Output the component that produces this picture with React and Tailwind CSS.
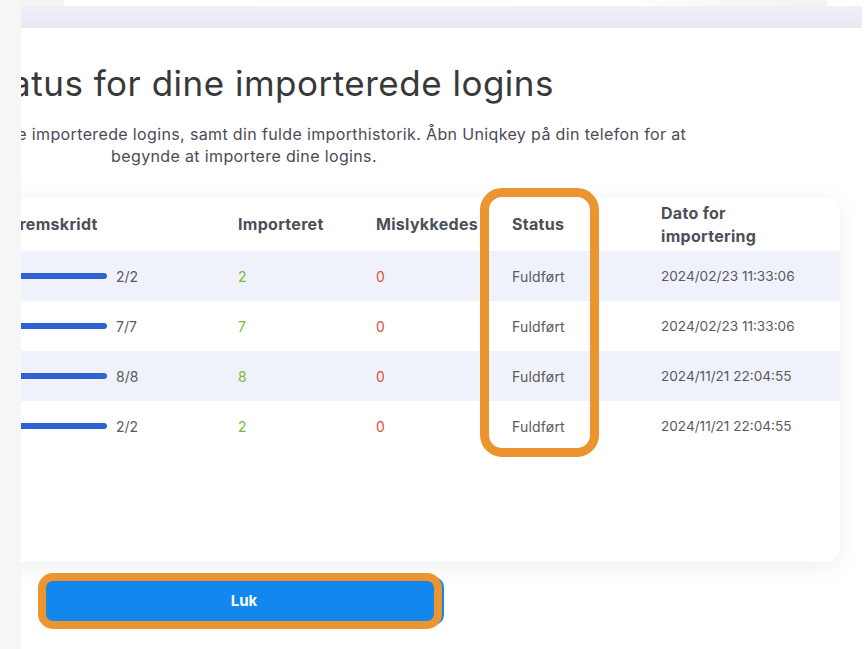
import React from "react";

const rows = [
  { done: "2/2", imported: "2", failed: "0", status: "Fuldført", date: "2024/02/23 11:33:06" },
  { done: "7/7", imported: "7", failed: "0", status: "Fuldført", date: "2024/02/23 11:33:06" },
  { done: "8/8", imported: "8", failed: "0", status: "Fuldført", date: "2024/11/21 22:04:55" },
  { done: "2/2", imported: "2", failed: "0", status: "Fuldført", date: "2024/11/21 22:04:55" },
];

export default function App() {
  return (
    <div className="relative w-[867px] h-[649px] overflow-hidden bg-white font-['Inter',sans-serif]">
      {/* left page edge */}
      <div className="absolute left-0 top-0 z-20 h-full w-[21px] bg-[#f6f6f6]" />

      {/* top strip */}
      <div className="flex h-[6px]">
        <div className="w-[64px] bg-[#f5f5f5]" />
        <div className="flex-1" />
        <div className="w-[200px] bg-gradient-to-r from-white via-[#f7f7f7] to-[#f3f3f3]" />
        <div className="w-[40px]" />
      </div>
      <div className="ml-[21px] mr-[5px] h-[22px] bg-gradient-to-b from-[#eff0f9] to-[#e6e8f3]" />

      {/* heading */}
      <div className="ml-[-135px] mt-[35px] w-[800px] text-center">
        <h1 className="whitespace-nowrap text-[35px] leading-[40px] font-normal tracking-[0.5px] text-[#383838]">
          Status for dine importerede logins
        </h1>
      </div>

      <div className="ml-[-256px] mt-[20px] w-[1000px] text-center text-[16px] leading-[22px] tracking-[0.36px] text-[#4b4b58]">
        <p className="whitespace-nowrap">
          Her vises status for alle dine importerede logins, samt din fulde importhistorik. Åbn Uniqkey på din telefon for at
        </p>
        <p className="whitespace-nowrap">begynde at importere dine logins.</p>
      </div>

      {/* table card */}
      <div className="ml-[-40px] mt-[31px] w-[880px] rounded-[14px] bg-white pb-[111px] pl-[50px] shadow-[0_4px_24px_rgba(0,0,0,0.07)]">
        <div className="grid h-[53px] grid-cols-[228px_138px_136px_149px_1fr] items-center text-[16px] font-bold leading-[23px] tracking-[0.3px] text-[#4b4f59]">
          <div>Fremskridt</div>
          <div>Importeret</div>
          <div>Mislykkedes</div>
          <div>Status</div>
          <div>
            Dato for
            <br />
            importering
          </div>
        </div>
        {rows.map((r, i) => (
          <div
            key={i}
            className={`-ml-[50px] grid h-[50px] grid-cols-[228px_138px_136px_149px_1fr] items-center pl-[50px] text-[14px] text-[#5a5a5a] ${
              i % 2 === 0 ? "bg-[#eff2fb]" : "bg-white"
            }`}
          >
            <div className="flex items-center gap-[9px]">
              <div className="h-[6px] w-[97px] rounded-full bg-[#2f63cf]" />
              <span>{r.done}</span>
            </div>
            <div className="text-[#7cb83a]">{r.imported}</div>
            <div className="text-[#e2503b]">{r.failed}</div>
            <div className="tracking-[0.2px]">{r.status}</div>
            <div className="text-[13.6px]">{r.date}</div>
          </div>
        ))}
      </div>

      {/* close button */}
      <div className="ml-[44px] mt-[15px]">
        <button className="h-[48px] w-[400px] rounded-[10px] bg-[#1287ee] text-[15px] font-bold text-white">
          Luk
        </button>
      </div>

      {/* highlight annotations */}
      <div className="pointer-events-none absolute left-[480px] top-[188px] z-10 h-[269px] w-[119px] rounded-[22px] border-[9px] border-[#ec9530]" />
      <div className="pointer-events-none absolute left-[38px] top-[573px] z-10 h-[56px] w-[404px] rounded-[15px] border-[8px] border-[#ec9530]" />
    </div>
  );
}
